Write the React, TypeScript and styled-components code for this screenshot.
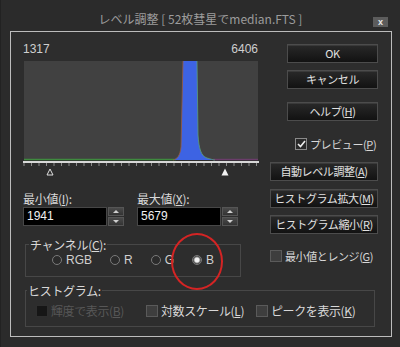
import React from 'react';
import styled, { createGlobalStyle } from 'styled-components';

const GlobalStyle = createGlobalStyle`
  html, body {
    margin: 0;
    padding: 0;
    background: #2a2a2a;
  }
  body {
    font-family: "Noto Sans CJK JP", "Noto Sans", sans-serif;
  }
`;

const Frame = styled.div`
  position: relative;
  width: 400px;
  height: 347px;
  overflow: hidden;
  background: #2b2b2b;
  border-left: 1px solid #222;
  box-sizing: border-box;
  display: flex;
  flex-direction: column;
`;

const TitleBar = styled.div`
  position: relative;
  height: 31px;
  flex-shrink: 0;
  box-sizing: border-box;
  padding-top: 6px;
  display: flex;
  align-items: center;
  justify-content: center;
  color: #9c9c9c;
  font-size: 12px;
`;

const CloseBtn = styled.div`
  position: absolute;
  right: 12px;
  top: 17px;
  width: 15px;
  height: 10px;
  background: #5c5c5c;
  color: #e8e8e8;
  font: bold 9px/10px "Liberation Sans", sans-serif;
  text-align: center;
`;

const Panel = styled.div`
  flex: 1;
  margin: 0 8px 10px 9px;
  border: 1px solid #bcbcbc;
  background: #2d2d2d;
  padding: 9px 13px 0 12px;
  display: flex;
  flex-direction: column;
  color: #d8d8d8;
  font-size: 12px;
`;

const TopArea = styled.div`
  display: flex;
  justify-content: space-between;
`;

const LeftCol = styled.div`
  width: 236px;
  display: flex;
  flex-direction: column;
`;

const RightCol = styled.div`
  width: 108px;
  display: flex;
  flex-direction: column;
  align-items: flex-end;
`;

const NumRow = styled.div`
  width: 235px;
  height: 16px;
  display: flex;
  justify-content: space-between;
  font: 12px/16px "Liberation Sans", sans-serif;
  color: #cfcfcf;
`;

const Chart = styled.svg`
  display: block;
`;

const FieldRow = styled.div`
  margin-top: 13px;
  display: flex;
  gap: 13px;
`;

const Field = styled.div`
  display: flex;
  flex-direction: column;
`;

const FieldLabel = styled.div`
  line-height: 15px;
  height: 15px;
  letter-spacing: -0.3px;
`;

const InputRow = styled.div`
  margin-top: 1px;
  display: flex;
  gap: 1px;
`;

const NumInput = styled.div`
  width: 84px;
  height: 19px;
  box-sizing: border-box;
  background: #000;
  border: 1px solid #474747;
  color: #f0f0f0;
  font: 12px/17px "Liberation Sans", sans-serif;
  padding-left: 3px;
`;

const Spinner = styled.div`
  width: 16px;
  height: 19px;
  display: flex;
  flex-direction: column;
  gap: 1px;
`;

const SpinHalf = styled.div<{ $down?: boolean }>`
  flex: 1;
  background: linear-gradient(#4a4a4a, #333);
  border: 1px solid #555;
  display: flex;
  align-items: center;
  justify-content: center;
  &::after {
    content: '';
    border-left: 3px solid transparent;
    border-right: 3px solid transparent;
    ${(p) => (p.$down ? 'border-top: 3px solid #cfcfcf;' : 'border-bottom: 3px solid #cfcfcf;')}
  }
`;

const Group = styled.fieldset<{ $full?: boolean }>`
  margin: ${(p) => (p.$full ? '7px 3px 0 2px' : '12px 0 0 2px')};
  width: ${(p) => (p.$full ? 'auto' : '216px')};
  box-sizing: border-box;
  border: 1px solid #474747;
  padding: ${(p) => (p.$full ? '0 0 8px 1px' : '0 0 9px 3px')};
  min-width: 0;
`;

const Legend = styled.legend`
  padding: 0 1px;
  font-size: 12px;
  line-height: 13px;
  letter-spacing: -0.3px;
  color: #d8d8d8;
`;

const RadioRow = styled.div`
  margin-top: 2px;
  padding-left: 23px;
  height: 14px;
  display: flex;
  align-items: center;
  gap: 18px;
`;

const RadioItem = styled.div`
  display: flex;
  align-items: center;
  gap: 4px;
  font: 12px/14px "Liberation Sans", sans-serif;
  color: #d0d0d0;
`;

const RadioDot = styled.span<{ $on?: boolean }>`
  width: 10px;
  height: 10px;
  box-sizing: border-box;
  border-radius: 50%;
  border: 1px solid #7a7a7a;
  background: ${(p) =>
    p.$on ? 'radial-gradient(circle, #f2f2f2 0 2px, #8a8a8a 3px, #3a3a3a 4px)' : '#2b2b2b'};
`;

const CheckRow = styled.div`
  margin-top: 7px;
  padding-left: 9px;
  display: flex;
`;

const CheckItem = styled.div<{ $w?: number; $dim?: boolean }>`
  width: ${(p) => (p.$w ? `${p.$w}px` : 'auto')};
  display: flex;
  align-items: center;
  gap: 3px;
  color: ${(p) => (p.$dim ? '#575757' : '#d8d8d8')};
  font-size: 12px;
  line-height: 14px;
  white-space: nowrap;
`;

const CheckText = styled.span`
  letter-spacing: -0.4px;
`;

const Box = styled.span<{ $dim?: boolean; $checked?: boolean }>`
  width: 12px;
  height: 12px;
  box-sizing: border-box;
  border: 1px solid ${(p) => (p.$dim ? '#2e2e2e' : p.$checked ? '#8a8a8a' : '#5a5a5a')};
  background: ${(p) => (p.$dim ? '#161616' : p.$checked ? '#2a2a2a' : '#3e3e3e')};
  display: flex;
  align-items: center;
  justify-content: center;
  flex-shrink: 0;
`;

const Button = styled.div<{ $w?: number; $mt: number }>`
  width: ${(p) => (p.$w ? `${p.$w}px` : '100%')};
  height: 19px;
  margin-top: ${(p) => p.$mt}px;
  box-sizing: border-box;
  background: linear-gradient(#292929, #121212);
  border: 1px solid #4c4c4c;
  box-shadow: inset 0 1px 0 #3a3a3a;
  color: #e2e2e2;
  font-size: 11px;
  line-height: 17px;
  letter-spacing: -0.4px;
  text-align: center;
  white-space: nowrap;
`;

const SideCheck = styled(CheckItem)<{ $mt: number; $pl: number }>`
  align-self: stretch;
  margin-top: ${(p) => p.$mt}px;
  padding-left: ${(p) => p.$pl}px;
  font-size: 11px;
`;

const Mn = styled.span`
  text-decoration: underline;
`;

const Annotation = styled.div`
  position: absolute;
  left: 170px;
  top: 233px;
  width: 52px;
  height: 57px;
  box-sizing: border-box;
  border: 2px solid #d42424;
  border-radius: 50%;
  pointer-events: none;
`;

const Tick = () => (
  <svg width="9" height="8" viewBox="0 0 9 8">
    <path d="M1 4 L3.5 6.5 L8 1" fill="none" stroke="#f0f0f0" strokeWidth="1.6" />
  </svg>
);

const Histogram: React.FC = () => {
  const ticks = Array.from({ length: 32 }, (_, i) => 1 + i * 7.5);
  return (
    <Chart width="236" height="121" viewBox="0 0 236 121">
      <rect x="1" y="4" width="234" height="99" fill="#414141" />
      <line x1="1" y1="102.5" x2="153" y2="102.5" stroke="#3f8a3f" strokeWidth="1.5" />
      <line x1="190" y1="102.5" x2="235" y2="102.5" stroke="#6a3d6a" strokeWidth="1.5" />
      <path
        d="M150 103 C154 102 157 99 158 90 L160 4 L174 4 L175 78 C176 92 178 99 184 101 C188 102 190 103 192 103 Z"
        fill="#3d63e3"
      />
      <path d="M150 103 C154 102 157 99 158 90 L160 4" fill="none" stroke="#9c5a3a" strokeWidth="0.8" />
      <path d="M174 4 L175 78 C176 92 178 99 184 101 C188 102 190 103 192 103" fill="none" stroke="#5aa07a" strokeWidth="0.8" />
      <line x1="0" y1="105" x2="236" y2="105" stroke="#d8d8d8" strokeWidth="2" />
      {ticks.map((x) => (
        <line key={x} x1={x} y1="106" x2={x} y2="109" stroke="#8a8a8a" strokeWidth="1" />
      ))}
      <path d="M24 118 L27 112 L30 118 Z" fill="#2d2d2d" stroke="#e0e0e0" strokeWidth="1" />
      <path d="M198.5 118.5 L202 111.5 L205.5 118.5 Z" fill="#f2f2f2" />
    </Chart>
  );
};

const Spin: React.FC = () => (
  <Spinner>
    <SpinHalf />
    <SpinHalf $down />
  </Spinner>
);

export default function App() {
  return (
    <Frame>
      <GlobalStyle />
      <TitleBar>
        レベル調整 [ 52枚彗星でmedian.FTS ]
        <CloseBtn>x</CloseBtn>
      </TitleBar>
      <Panel>
        <TopArea>
          <LeftCol>
            <NumRow>
              <span>1317</span>
              <span>6406</span>
            </NumRow>
            <Histogram />
            <FieldRow>
              <Field>
                <FieldLabel>
                  最小値(<Mn>I</Mn>):
                </FieldLabel>
                <InputRow>
                  <NumInput>1941</NumInput>
                  <Spin />
                </InputRow>
              </Field>
              <Field>
                <FieldLabel>
                  最大値(<Mn>X</Mn>):
                </FieldLabel>
                <InputRow>
                  <NumInput>5679</NumInput>
                  <Spin />
                </InputRow>
              </Field>
            </FieldRow>
            <Group>
              <Legend>
                チャンネル(<Mn>C</Mn>):
              </Legend>
              <RadioRow>
                <RadioItem>
                  <RadioDot />
                  RGB
                </RadioItem>
                <RadioItem>
                  <RadioDot />R
                </RadioItem>
                <RadioItem>
                  <RadioDot />G
                </RadioItem>
                <RadioItem>
                  <RadioDot $on />B
                </RadioItem>
              </RadioRow>
            </Group>
          </LeftCol>
          <RightCol>
            <Button $w={91} $mt={3}>OK</Button>
            <Button $w={91} $mt={7}>キャンセル</Button>
            <Button $w={91} $mt={13}>
              ヘルプ(<Mn>H</Mn>)
            </Button>
            <SideCheck $mt={16} $pl={25}>
              <Box $checked>
                <Tick />
              </Box>
              <CheckText>
                プレビュー(<Mn>P</Mn>)
              </CheckText>
            </SideCheck>
            <Button $mt={11}>
              自動レベル調整(<Mn>A</Mn>)
            </Button>
            <Button $mt={8}>
              ヒストグラム拡大(<Mn>M</Mn>)
            </Button>
            <Button $mt={7}>
              ヒストグラム縮小(<Mn>R</Mn>)
            </Button>
            <SideCheck $mt={15} $pl={0}>
              <Box />
              <CheckText>
                最小値とレンジ(<Mn>G</Mn>)
              </CheckText>
            </SideCheck>
          </RightCol>
        </TopArea>
        <Group $full>
          <Legend>ヒストグラム:</Legend>
          <CheckRow>
            <CheckItem $w={110} $dim>
              <Box $dim />
              <CheckText>
                輝度で表示(<Mn>B</Mn>)
              </CheckText>
            </CheckItem>
            <CheckItem $w={110}>
              <Box />
              <CheckText>
                対数スケール(<Mn>L</Mn>)
              </CheckText>
            </CheckItem>
            <CheckItem $w={110}>
              <Box />
              <CheckText>
                ピークを表示(<Mn>K</Mn>)
              </CheckText>
            </CheckItem>
          </CheckRow>
        </Group>
      </Panel>
      <Annotation />
    </Frame>
  );
}
